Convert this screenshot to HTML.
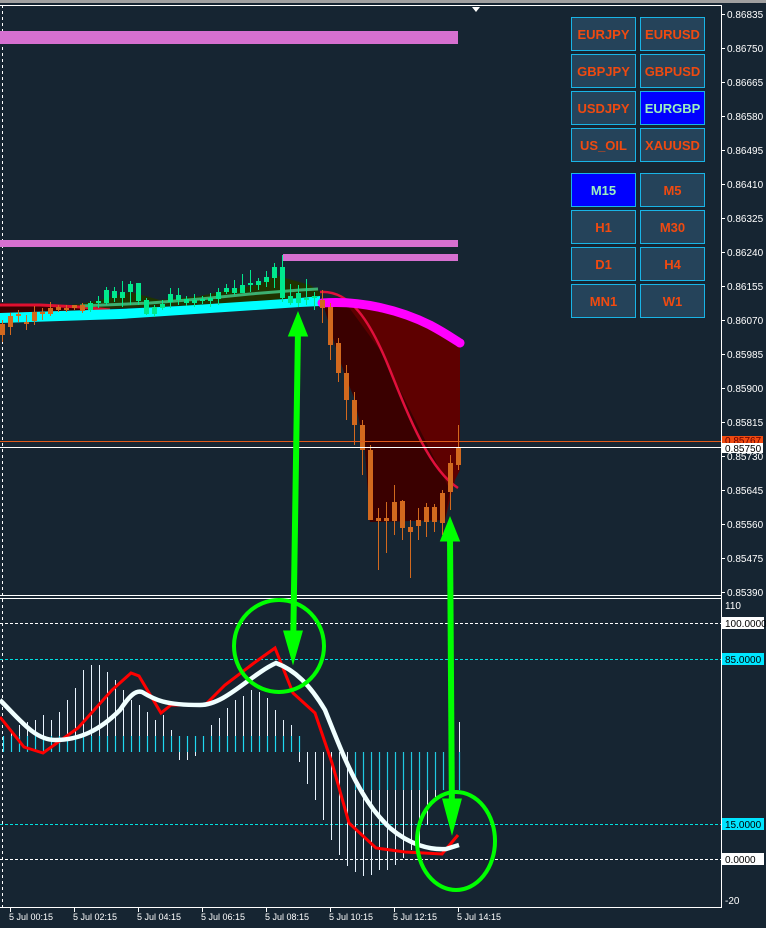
<!DOCTYPE html>
<html><head><meta charset="utf-8"><style>
html,body{margin:0;padding:0;background:#162532;}
body{width:766px;height:928px;overflow:hidden;position:relative;font-family:"Liberation Sans",sans-serif;}
svg{position:absolute;left:0;top:0;}
.b{position:absolute;width:65px;height:34px;background:#25435a;border:1px solid #19b4e6;box-sizing:border-box;color:#f04a10;font:bold 13px "Liberation Sans",sans-serif;text-align:center;line-height:33px;}
.b.on{background:#0000ff;color:#9cf0c0;}
</style></head><body>
<svg id="s" width="766" height="928" xmlns="http://www.w3.org/2000/svg" font-family="Liberation Sans, sans-serif">
<rect x="0" y="0" width="766" height="3" fill="#a0a0a0"/>
<line x1="0" y1="5.5" x2="721" y2="5.5" stroke="#fff" stroke-width="1"/>
<polygon points="472,7 480,7 476,12" fill="#fff"/>
<line x1="721.5" y1="5" x2="721.5" y2="908" stroke="#fff"/>
<line x1="2.5" y1="5" x2="2.5" y2="908" stroke="#fff" stroke-dasharray="3,3"/>
<rect x="0" y="31" width="458" height="13" fill="#d670d0"/>
<rect x="0" y="240" width="458" height="7" fill="#d670d0"/>
<rect x="283" y="254" width="175" height="7" fill="#d670d0"/>
<polygon points="80,304 100,300 130,292 160,300 200,296 230,290 260,284 275,275 285,278 310,285 320,292 320,300 0,313" fill="#1f3300"/>
<polygon points="0,303 40,304 80,306 100,308 80,312 0,314" fill="#3a0000"/>
<polyline points="0,305 40,305 80,307 110,310" stroke="#e01030" stroke-width="3" fill="none"/>
<polygon points="0,313 60,311 120,309 180,306 240,302 300,298 320,296 320,306 300,307 240,311 180,315 120,319 60,321 0,323" fill="#00ffff"/>
<polyline points="80,306 150,303 200,299 250,294 300,290 318,289" stroke="#3cb070" stroke-width="3" fill="none"/>
<polygon points="320,300 360,302 400,310 440,328 460,340 460,470 455,480 445,520 370,522 365,450 355,400 345,375 335,345 325,310" fill="#5e0000"/>
<polygon points="325,300 345,302 380,350 410,410 440,470 450,490 445,520 370,522 365,450 355,400 345,375 335,345 325,310" fill="#3a0000"/>
<path d="M320,292 C350,290 370,320 390,370 C410,420 430,470 458,488" stroke="#e0103c" stroke-width="2.5" fill="none"/>
<path d="M322,303 C360,300 400,310 430,325 C445,333 452,338 460,343" stroke="#ff00ff" stroke-width="9" fill="none" stroke-linecap="round"/>
<g id="cdl"></g>
<line x1="0" y1="441.5" x2="721" y2="441.5" stroke="#e05a1a"/>
<line x1="0" y1="447.5" x2="721" y2="447.5" stroke="#fff"/>
<line x1="0" y1="595.5" x2="721" y2="595.5" stroke="#fff"/>
<line x1="0" y1="598.5" x2="721" y2="598.5" stroke="#fff"/>
<g id="axis" font-size="10" fill="#ffffff"></g>
<rect x="722" y="436" width="41" height="9" fill="#f04a10"/>
<text x="725" y="444" font-size="10" fill="#600">0.85767</text>
<rect x="722" y="443" width="41" height="10" fill="#fff"/>
<text x="725" y="452" font-size="10" fill="#000">0.85750</text>
<line x1="0" y1="623.5" x2="721" y2="623.5" stroke="#fff" stroke-dasharray="3,2"/>
<line x1="0" y1="659.5" x2="721" y2="659.5" stroke="#00e0e0" stroke-dasharray="3,2"/>
<line x1="0" y1="824.5" x2="721" y2="824.5" stroke="#00e0e0" stroke-dasharray="3,2"/>
<line x1="0" y1="859.5" x2="721" y2="859.5" stroke="#fff" stroke-dasharray="3,2"/>
<g id="hist"></g>
<polyline points="0,717 24,747 43,753 78,728 112,690 131,673 139,676 161,713 171,705 205,705 225,685 254,663 275,648 293,693 315,713 332,763 349,823 376,848 405,852 442,854 458,835" stroke="#ff0000" stroke-width="3" fill="none"/>
<path d="M0,700 C20,720 35,740 55,740 C80,740 100,730 120,710 C130,695 136,690 142,692 C155,700 165,705 200,705 C225,705 250,675 276,663 C295,670 310,685 325,710 C345,760 360,800 390,828 C410,845 430,850 446,849 L459,845" stroke="#f0ffff" stroke-width="4.5" fill="none"/>
<text x="725" y="609" font-size="10" fill="#fff">110</text>
<rect x="722" y="617" width="42" height="12" fill="#fff"/><text x="725" y="627" font-size="10" fill="#000">100.0000</text>
<rect x="722" y="653" width="42" height="12" fill="#00e5ff"/><text x="725" y="663" font-size="10" fill="#000">85.0000</text>
<rect x="722" y="818" width="42" height="12" fill="#00e5ff"/><text x="725" y="828" font-size="10" fill="#000">15.0000</text>
<rect x="722" y="853" width="42" height="12" fill="#fff"/><text x="725" y="863" font-size="10" fill="#000">0.0000</text>
<text x="725" y="904" font-size="10" fill="#fff">-20</text>
<line x1="0" y1="907.5" x2="721" y2="907.5" stroke="#fff"/>
<g id="time" font-size="9" fill="#fff"></g>
<g stroke="#00ff00" fill="none">
<path d="M298,330 L293,655" stroke-width="6"/>
<polygon points="298,315 290,335 306,335" fill="#00ff00" stroke-width="3"/>
<polygon points="293,660 285,632 301,632" fill="#00ff00" stroke-width="3"/>
<ellipse cx="279" cy="646" rx="45" ry="46" stroke-width="4"/>
<path d="M450,535 L452,822" stroke-width="6"/>
<polygon points="450,520 442,540 458,540" fill="#00ff00" stroke-width="3"/>
<polygon points="452,830 444,800 460,800" fill="#00ff00" stroke-width="3"/>
<ellipse cx="456" cy="841" rx="39" ry="49" stroke-width="4"/>
</g>
</svg>
<div class="b" style="left:571px;top:17px">EURJPY</div><div class="b" style="left:640px;top:17px">EURUSD</div>
<div class="b" style="left:571px;top:54px">GBPJPY</div><div class="b" style="left:640px;top:54px">GBPUSD</div>
<div class="b" style="left:571px;top:91px">USDJPY</div><div class="b on" style="left:640px;top:91px">EURGBP</div>
<div class="b" style="left:571px;top:128px">US_OIL</div><div class="b" style="left:640px;top:128px">XAUUSD</div>
<div class="b on" style="left:571px;top:173px">M15</div><div class="b" style="left:640px;top:173px">M5</div>
<div class="b" style="left:571px;top:210px">H1</div><div class="b" style="left:640px;top:210px">M30</div>
<div class="b" style="left:571px;top:247px">D1</div><div class="b" style="left:640px;top:247px">H4</div>
<div class="b" style="left:571px;top:284px">MN1</div><div class="b" style="left:640px;top:284px">W1</div>
<script>
var NS="http://www.w3.org/2000/svg";
function el(p,t,a,txt){var e=document.createElementNS(NS,t);for(var k in a)e.setAttribute(k,a[k]);if(txt)e.textContent=txt;document.getElementById(p).appendChild(e);}
var prices=["0.86835","0.86750","0.86665","0.86580","0.86495","0.86410","0.86325","0.86240","0.86155","0.86070","0.85985","0.85900","0.85815","0.85730","0.85645","0.85560","0.85475","0.85390"];
for(var i=0;i<prices.length;i++){var y=14+i*34;if(i==13)y=456;el("axis","line",{x1:721,y1:y+.5,x2:725,y2:y+.5,stroke:"#fff"});el("axis","text",{x:727,y:y+4},prices[i]);}
var tl=["5 Jul 00:15","5 Jul 02:15","5 Jul 04:15","5 Jul 06:15","5 Jul 08:15","5 Jul 10:15","5 Jul 12:15","5 Jul 14:15"];
for(var i=0;i<8;i++){var x=10+i*64;el("time","line",{x1:x+.5,y1:908,x2:x+.5,y2:912,stroke:"#fff"});el("time","text",{x:x-1,y:920},tl[i]);}
// [x, top, bottom, hi, lo, bull]
var C=[[2,324,335,320,342,0],[10,316,327,313,335,0],[18,314,316,310,322,0],[26,322,324,315,330,0],[34,312,321,306,325,0],[42,312,314,308,320,0],[50,308,314,302,316,0],[58,307,310,305,312,0],[66,308,309,305,312,0],[74,305,308,305,310,0],[82,305,311,303,313,0],
[90,303,310,301,312,1],[98,301,302,296,308,1],[106,290,303,287,305,1],[114,291,298,287,302,1],[122,292,298,281,307,1],[130,284,292,281,305,1],[138,283,301,283,305,1],[146,300,314,298,315,1],[154,307,314,305,317,1],[162,304,308,300,310,1],[170,294,302,288,308,1],[178,295,300,288,305,1],[186,299,303,296,306,1],[194,300,303,294,307,1],[202,299,301,296,304,1],[210,298,301,293,307,1],[218,292,299,288,305,1],[226,288,292,284,294,1],[234,288,293,280,295,1],[242,285,293,274,293,1],[250,283,285,270,292,1],[258,281,285,278,290,1],[266,277,282,271,287,1],[274,267,278,263,288,1],[282,267,298,255,302,1],[290,296,303,284,305,1],[298,293,303,285,307,1],[306,298,300,279,305,1],[314,296,298,292,310,1],
[322,300,308,290,323,0],[330,307,345,303,360,0],[338,343,373,338,382,0],[346,373,400,365,420,0],[354,400,425,392,445,0],[362,425,450,420,475,0],[370,450,520,445,520,0],[378,518,521,508,570,0],[386,518,521,502,553,0],[394,502,521,485,535,0],[402,501,528,500,540,0],[410,527,532,520,578,0],[418,520,526,508,540,0],[426,507,522,503,537,0],[434,507,522,504,532,0],[442,493,523,490,535,0],[450,463,492,455,510,0],[458,447,465,425,470,0]];
for(var i=0;i<C.length;i++){var c=C[i],col=c[5]?"#00e88c":"#d2691e";
el("cdl","line",{x1:c[0]+.5,y1:c[3],x2:c[0]+.5,y2:c[4],stroke:col,"stroke-width":1});
el("cdl","rect",{x:c[0]-2,y:c[1],width:5,height:Math.max(2,c[2]-c[1]),fill:col});}
var H=[[3,738],[11,730],[19,725],[27,722],[35,720],[43,715],[51,720],[59,712],[67,700],[75,688],[83,670],[91,665],[99,665],[107,672],[115,680],[123,690],[131,700],[139,705],[147,712],[155,720],[163,715],[171,730],[179,760],[187,760],[195,756],[203,750],[211,725],[219,718],[227,708],[235,700],[243,696],[251,690],[259,692],[267,698],[275,710],[283,720],[291,725],[299,762],[307,784],[315,800],[323,820],[331,840],[339,855],[347,866],[355,872],[363,876],[371,875],[379,870],[387,870],[395,865],[403,858],[411,850],[419,845],[427,825],[435,800],[443,760],[451,740],[459,722]];
for(var i=0;i<H.length;i++){var h=H[i];el("hist","line",{x1:h[0]+.5,y1:752,x2:h[0]+.5,y2:h[1],stroke:"#e8f4ff","stroke-width":1});
if(h[0]<300)el("hist","line",{x1:h[0]+.5,y1:752,x2:h[0]+.5,y2:736,stroke:"#20d8f0","stroke-width":1.2});
else if(h[0]>350)el("hist","line",{x1:h[0]+.5,y1:752,x2:h[0]+.5,y2:790,stroke:"#20c8e0","stroke-width":1.2});}
</script>
</body></html>
